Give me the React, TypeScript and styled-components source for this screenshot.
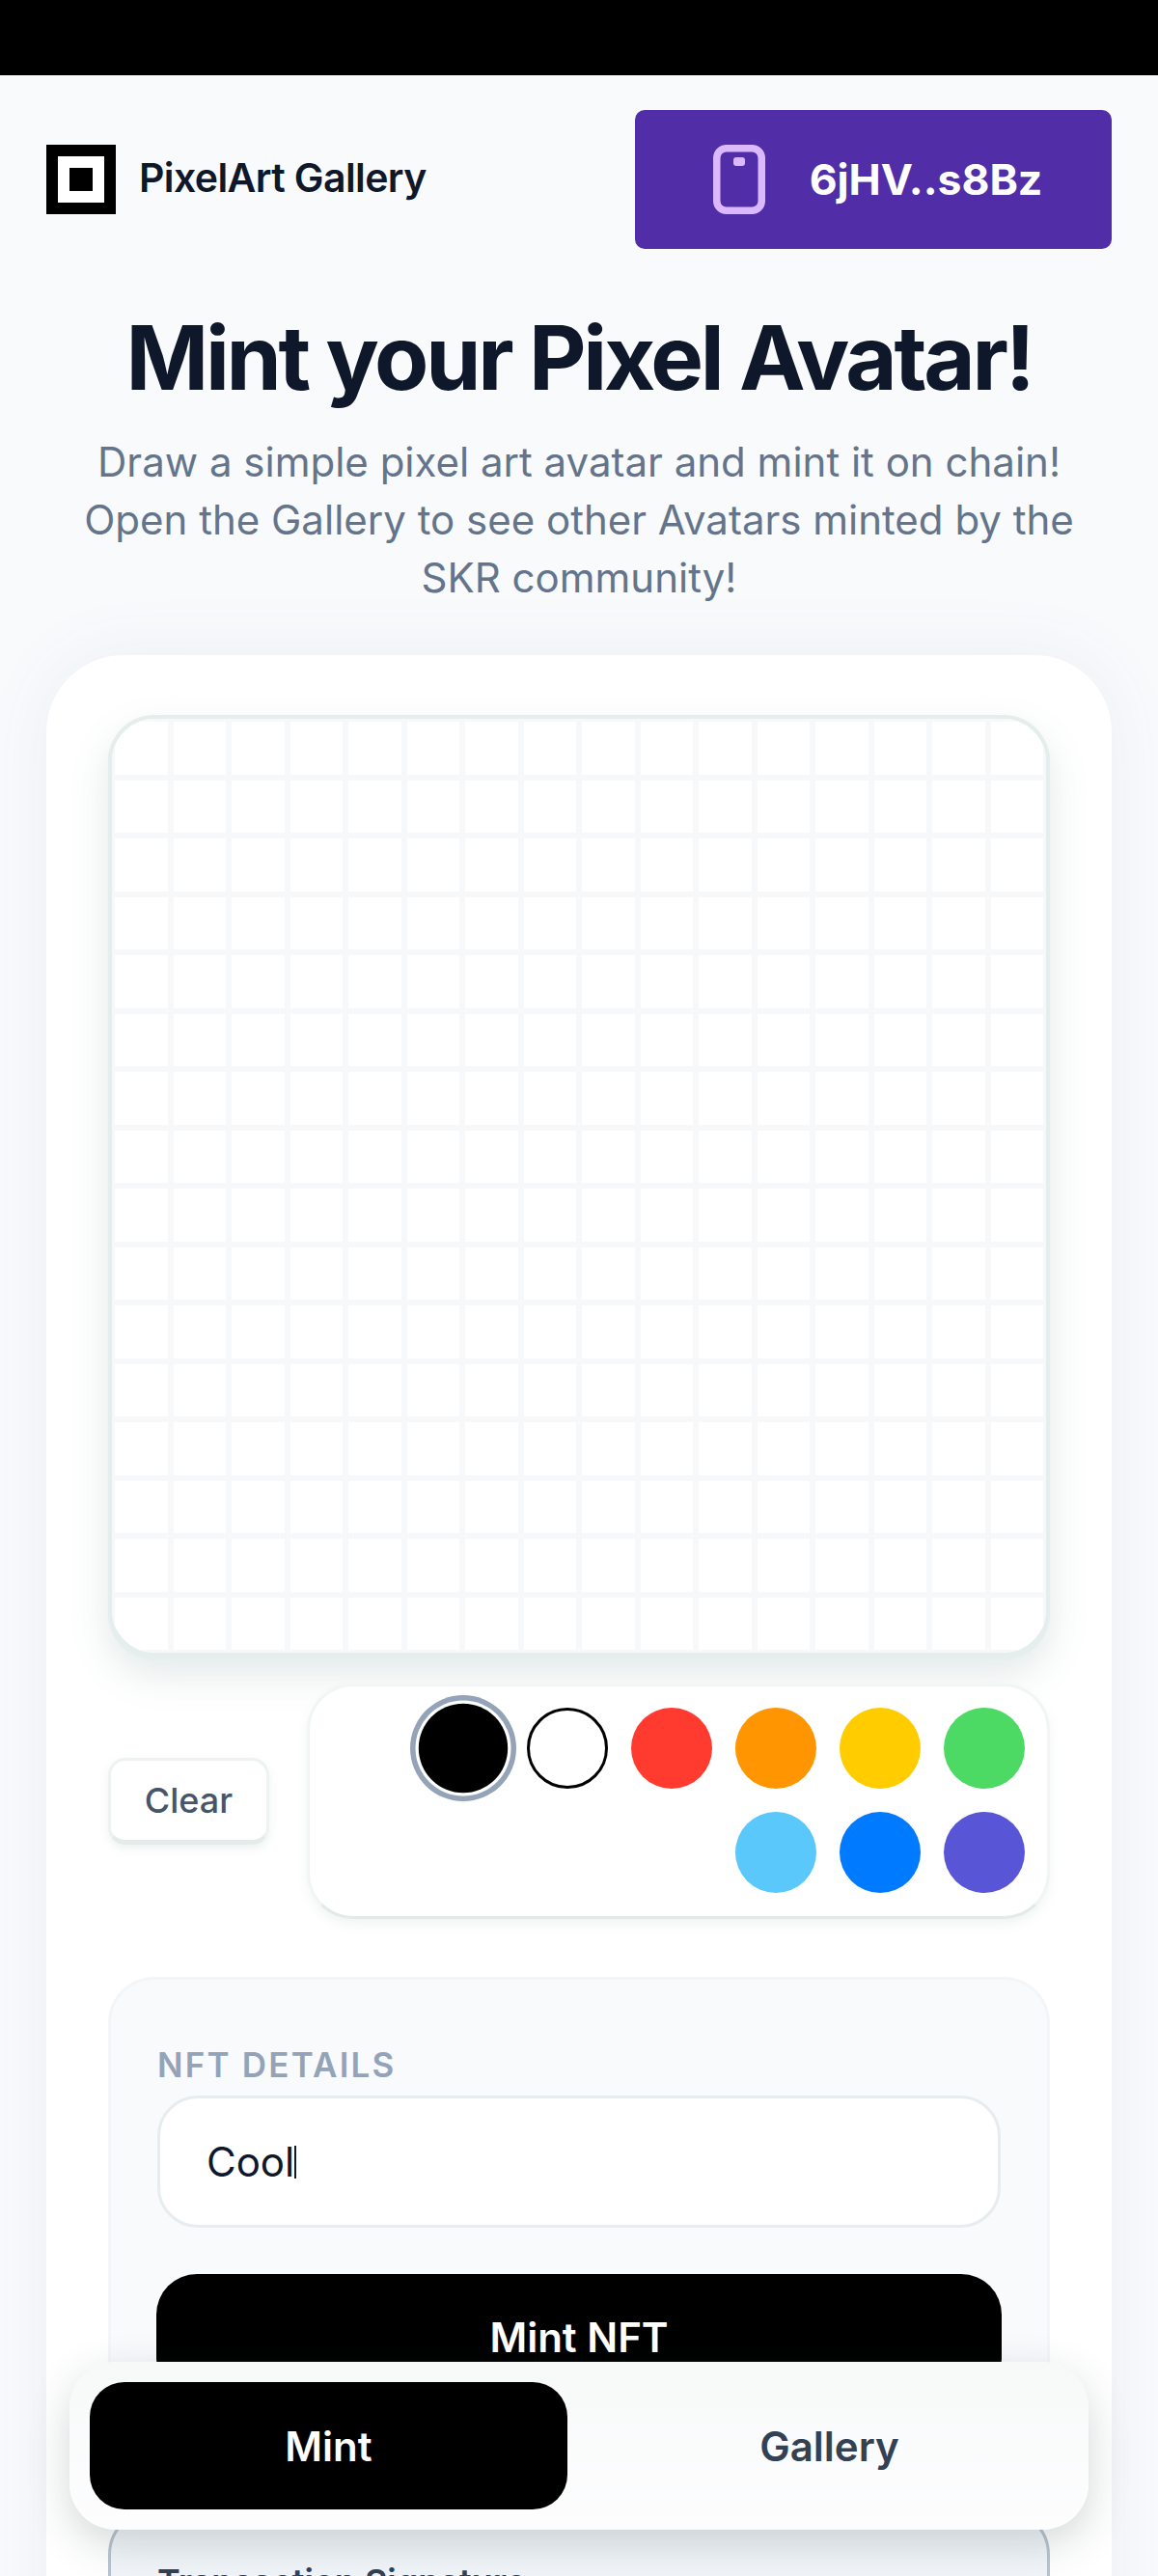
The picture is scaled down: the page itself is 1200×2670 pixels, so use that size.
import styled, { createGlobalStyle } from "styled-components";

const COLORS = ["#000000", "#ffffff", "#ff3b30", "#ff9500", "#ffcc00", "#4cd964", "#5ac8fa", "#007aff", "#5856d6"];
const CELLS = Array.from({ length: 256 }, (_, i) => i);

const GlobalStyle = createGlobalStyle`
  html, body {
    margin: 0;
    height: 2670px;
    overflow: hidden;
    background: #f8fafc;
    font-family: "Inter", "Liberation Sans", sans-serif;
  }
  * { box-sizing: border-box; }
`;

const PhoneIcon = () => (
  <svg width="54" height="72" viewBox="0 0 54 72" fill="none">
    <rect x="3.75" y="3.75" width="46.5" height="64.5" rx="10" stroke="#dcb8ff" strokeWidth="7.5" />
    <rect x="21" y="13" width="12" height="9" rx="3" fill="#dcb8ff" />
  </svg>
);

export default function App() {
  return (
    <Page>
      <GlobalStyle />
      <StatusBar />
      <Header>
        <Brand>
          <Logo>
            <LogoDot />
          </Logo>
          <BrandName>PixelArt Gallery</BrandName>
        </Brand>
        <WalletButton>
          <PhoneIcon />
          <span>6jHV..s8Bz</span>
        </WalletButton>
      </Header>
      <Hero>
        <Title>Mint your Pixel Avatar!</Title>
        <Subtitle>
          Draw a simple pixel art avatar and mint it on chain!
          <br />
          Open the Gallery to see other Avatars minted by the
          <br />
          SKR community!
        </Subtitle>
      </Hero>
      <Card>
        <Canvas>
          {CELLS.map((i) => (
            <Cell key={i} />
          ))}
        </Canvas>
        <Tools>
          <ClearButton>Clear</ClearButton>
          <Palette>
            {COLORS.map((c, i) => (
              <Swatch key={c} $color={c} $selected={i === 0} />
            ))}
          </Palette>
        </Tools>
        <Details>
          <Label>NFT DETAILS</Label>
          <Input>Cool</Input>
          <MintButton>Mint NFT</MintButton>
        </Details>
        <Signature>
          <SignatureTitle>Transaction Signature</SignatureTitle>
        </Signature>
      </Card>
      <BottomNav>
        <Tab $active>Mint</Tab>
        <Tab>Gallery</Tab>
      </BottomNav>
    </Page>
  );
}

const Page = styled.div`
  position: relative;
  width: 1200px;
  height: 2670px;
  overflow: hidden;
  background: #f8fafc;
`;

const StatusBar = styled.div`
  height: 78px;
  background: #000;
`;

const Header = styled.header`
  display: flex;
  align-items: center;
  justify-content: space-between;
  padding: 36px 48px 0;
`;

const Brand = styled.div`
  display: flex;
  align-items: center;
  gap: 24px;
`;

const Logo = styled.div`
  display: flex;
  align-items: center;
  justify-content: center;
  width: 72px;
  height: 72px;
  background: #fff;
  border: 12px solid #000;
`;

const LogoDot = styled.div`
  width: 24px;
  height: 24px;
  background: #000;
`;

const BrandName = styled.div`
  font-size: 41px;
  line-height: 50px;
  margin-top: -4px;
  font-weight: 600;
  letter-spacing: -0.6px;
  color: #0f172a;
`;

const WalletButton = styled.button`
  display: flex;
  align-items: center;
  justify-content: center;
  gap: 46px;
  width: 494px;
  height: 144px;
  padding: 0 0 0 9px;
  border: 0;
  border-radius: 10px;
  background: #512da8;
  color: #fff;
  font-family: inherit;
  font-size: 44.5px;
  font-weight: 700;
`;

const Hero = styled.div`
  padding: 59px 40px 0;
  text-align: center;
`;

const Title = styled.h1`
  margin: 0;
  font-size: 92px;
  line-height: 108px;
  font-weight: 700;
  letter-spacing: -3.25px;
  color: #0f172a;
`;

const Subtitle = styled.p`
  margin: 24px 0 0;
  font-size: 42px;
  line-height: 60px;
  color: #64748b;
`;

const Card = styled.main`
  margin: 50px 48px 0;
  padding: 62px 64px;
  height: 2200px;
  background: #fff;
  border-radius: 80px;
  box-shadow: 0 0 70px rgba(100, 116, 139, 0.08);
`;

const Canvas = styled.div`
  display: grid;
  grid-template-columns: repeat(16, 1fr);
  grid-auto-rows: 60.5px;
  height: 976px;
  overflow: hidden;
  background: #fff;
  border: 4px solid #e6eded;
  border-radius: 48px;
  box-shadow: 0 4px 0 #e6eeee, 0 18px 40px rgba(90, 120, 120, 0.16);
`;

const Cell = styled.div`
  border: 3px solid #f6f8f9;
`;

const Tools = styled.div`
  display: flex;
  align-items: center;
  gap: 39px;
  margin-top: 28px;
`;

const ClearButton = styled.button`
  flex: none;
  width: 167px;
  height: 90px;
  background: #fff;
  border: 3px solid #eef2f2;
  border-bottom-width: 5px;
  border-bottom-color: #e4ebeb;
  border-radius: 18px;
  box-shadow: 0 4px 10px rgba(90, 120, 120, 0.1);
  color: #475569;
  font-family: inherit;
  font-size: 36px;
  font-weight: 500;
`;

const Palette = styled.div`
  flex: 1;
  display: flex;
  flex-wrap: wrap;
  justify-content: flex-end;
  gap: 24px;
  padding: 22px 23px 24px;
  background: #fff;
  border: 3px solid #f1f5f5;
  border-bottom-color: #e3eaea;
  border-radius: 48px;
  box-shadow: 0 6px 12px rgba(90, 120, 120, 0.08);
`;

const Swatch = styled.div<{ $color: string; $selected?: boolean }>`
  width: 84px;
  height: 84px;
  border-radius: 50%;
  background: ${({ $color }) => $color};
  ${({ $color }) => $color === "#ffffff" && "border: 3px solid #000;"}
  ${({ $selected }) =>
    $selected &&
    `
    transform: scale(1.1);
    box-shadow: 0 0 0 3px #fff, 0 0 0 8px #94a3b8;
  `}
`;

const Details = styled.section`
  margin-top: 60px;
  padding: 68px 48px 0;
  height: 527px;
  background: #f8fafc;
  border: 3px solid #f3f6f8;
  border-radius: 48px;
`;

const Label = styled.div`
  font-size: 35px;
  line-height: 40px;
  font-weight: 600;
  letter-spacing: 2.2px;
  color: #94a3b8;
`;

const Input = styled.div`
  display: flex;
  align-items: center;
  height: 137px;
  margin-top: 12px;
  padding-left: 48px;
  background: #fff;
  border: 3px solid #e7ecef;
  border-radius: 42px;
  font-size: 42px;
  color: #0f172a;

  &::after {
    content: "";
    width: 2px;
    height: 34px;
    background: #0f172a;
  }
`;

const MintButton = styled.button`
  display: block;
  width: 876px;
  height: 130px;
  margin: 48px 0 0 -1px;
  border: 0;
  border-radius: 42px;
  background: #000;
  color: #fff;
  font-family: inherit;
  font-size: 42px;
  font-weight: 600;
`;

const Signature = styled.section`
  margin-top: 24px;
  padding: 51px 48px;
  height: 400px;
  background: #f1f5f9;
  border: 3px solid #b8c3cf;
  border-radius: 48px;
`;

const SignatureTitle = styled.div`
  font-size: 36px;
  font-weight: 600;
  color: #334155;
`;

const BottomNav = styled.nav`
  position: absolute;
  left: 72px;
  top: 2448px;
  width: 1056px;
  height: 174px;
  display: flex;
  gap: 24px;
  padding: 21px;
  background: linear-gradient(#f7f9f9, #fdfdfe);
  border-radius: 48px;
  box-shadow: 0 14px 44px rgba(40, 60, 60, 0.2);
`;

const Tab = styled.div<{ $active?: boolean }>`
  flex: 1;
  display: flex;
  align-items: center;
  justify-content: center;
  border-radius: 36px;
  background: ${({ $active }) => ($active ? "#000" : "transparent")};
  color: ${({ $active }) => ($active ? "#fff" : "#334155")};
  font-size: 42px;
  font-weight: 600;
`;
